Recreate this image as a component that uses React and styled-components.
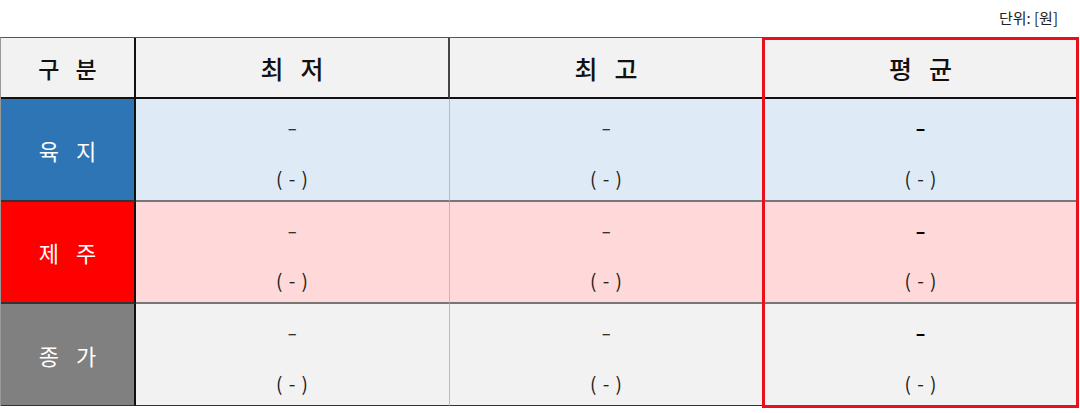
import React from "react";
import styled, { createGlobalStyle } from "styled-components";

const Global = createGlobalStyle`
  html, body { margin: 0; padding: 0; background: #ffffff; }
  body { font-family: "Noto Sans CJK KR", "Noto Sans", sans-serif; }
`;

const Page = styled.div`
  width: 1080px;
  height: 413px;
  box-sizing: border-box;
  padding: 5px 2px 0 0;
`;

const Unit = styled.div`
  text-align: right;
  font-size: 15px;
  line-height: 26px;
  color: #222;
  padding-right: 20px;
  height: 32px;
`;

const Table = styled.div`
  position: relative;
  display: grid;
  grid-template-columns: 135px 314px 314px 315px;
  grid-template-rows: 61px 103px 102px 102px;
  width: 1078px;
  border-top: 1px solid #555;
  border-left: 1px solid #999;
  box-sizing: border-box;
`;

const HeadCell = styled.div`
  background: #f2f2f2;
  display: flex;
  align-items: center;
  justify-content: center;
  font-size: ${(p) => (p.$first ? "23px" : "25px")};
  font-weight: 500;
  color: #111;
  letter-spacing: ${(p) => (p.$first ? "16px" : "17px")};
  padding-left: ${(p) => (p.$first ? "16px" : "17px")};
  border-bottom: 2px solid #111;
  border-right: ${(p) => (p.$first ? "2px solid #111" : "2px solid #444")};
  box-sizing: border-box;
`;

const LabelCell = styled.div`
  background: ${(p) => p.$bg};
  color: #fff;
  display: flex;
  align-items: center;
  justify-content: center;
  font-size: 22px;
  letter-spacing: 17px;
  padding-left: 17px;
  border-right: 2px solid #111;
  border-bottom: ${(p) => (p.$last ? "1px solid #333" : "2px solid #333")};
  box-sizing: border-box;
`;

const DataCell = styled.div`
  background: ${(p) => p.$bg};
  display: flex;
  flex-direction: column;
  align-items: center;
  justify-content: space-between;
  padding: 13px 0 7px;
  color: #222;
  border-right: 1px solid #bbb;
  border-bottom: ${(p) => (p.$last ? "1px solid #333" : "2px solid #777")};
  box-sizing: border-box;
`;

const Dash = styled.div`
  font-size: 19px;
  line-height: 30px;
  font-weight: ${(p) => (p.$bold ? 700 : 400)};
  color: ${(p) => (p.$bold ? "#000" : "#333")};
  transform: scaleX(1.5);
`;

const Paren = styled.div`
  font-size: 19px;
  line-height: 30px;
  color: #222;
  white-space: pre;
  letter-spacing: 1px;
`;

const Highlight = styled.div`
  position: absolute;
  left: 761px;
  top: -1px;
  width: 317px;
  height: 371px;
  border: 3px solid #e8101a;
  box-sizing: border-box;
  pointer-events: none;
`;

const rows = [
  { label: "육지", labelBg: "#2e75b6", bg: "#deebf7" },
  { label: "제주", labelBg: "#ff0000", bg: "#ffd8d9" },
  { label: "종가", labelBg: "#808080", bg: "#f2f2f2" },
];

export default function App() {
  return (
    <Page>
      <Global />
      <Unit>단위: [원]</Unit>
      <Table>
        <HeadCell $first>구분</HeadCell>
        <HeadCell>최저</HeadCell>
        <HeadCell>최고</HeadCell>
        <HeadCell>평균</HeadCell>
        {rows.map((r, i) => {
          const last = i === rows.length - 1;
          return (
            <React.Fragment key={r.label}>
              <LabelCell $bg={r.labelBg} $last={last}>{r.label}</LabelCell>
              {[0, 1, 2].map((c) => (
                <DataCell key={c} $bg={r.bg} $last={last}>
                  <Dash $bold={c === 2}>-</Dash>
                  <Paren>( - )</Paren>
                </DataCell>
              ))}
            </React.Fragment>
          );
        })}
        <Highlight />
      </Table>
    </Page>
  );
}
